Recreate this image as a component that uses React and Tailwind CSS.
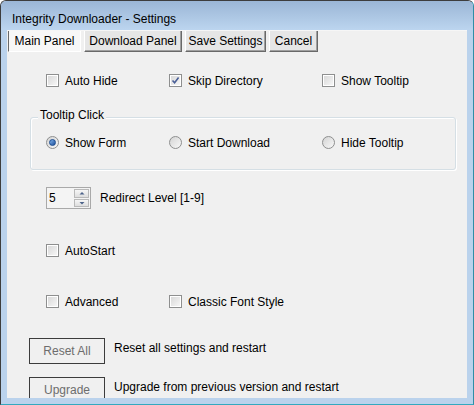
import React from 'react';

const font = { fontFamily: '"Liberation Sans", Arial, sans-serif' };

const Check = ({ checked }) => (
    <span className="w-[13px] h-[13px] shrink-0 border border-[#8e8f8f] bg-white p-px flex">
        <span className="flex-1 bg-gradient-to-br from-[#d9d9d9] to-[#f6f6f6] flex items-center justify-center">
            {checked && (
                <svg width="9" height="9" viewBox="0 0 9 9">
                    <path d="M1.5 4.5 L3.6 6.8 L7.6 1.6" fill="none" stroke="#4a5f97" strokeWidth="1.6" />
                </svg>
            )}
        </span>
    </span>
);

const Radio = ({ checked }) => (
    <span className="w-[13px] h-[13px] shrink-0 rounded-full border border-[#8e8f8f] bg-gradient-to-br from-[#d4d4d4] to-[#f8f8f8] flex items-center justify-center">
        {checked && <span className="w-[7px] h-[7px] rounded-full bg-gradient-to-br from-[#7fb2ec] to-[#1d4f9a] border border-[#194a8f]" />}
    </span>
);

const Option = ({ label, checked, radio }) => (
    <div className="flex items-center gap-[6px] h-[13px]">
        {radio ? <Radio checked={checked} /> : <Check checked={checked} />}
        <span className="text-[12px] leading-none text-black whitespace-nowrap">{label}</span>
    </div>
);

const TabButton = ({ label, active, w }) => (
    <div
        className={
            active
                ? 'h-[22px] flex items-center justify-center border border-t-[#696969] border-l-[#696969] border-r-white border-b-white bg-[#f7f7f7] text-[12px] text-black'
                : 'h-[22px] flex items-center justify-center border border-t-white border-l-white border-r-[#696969] border-b-[#696969] bg-[#e6e6e6] shadow-[inset_-1px_-1px_0_#a0a0a0] text-[12px] text-black'
        }
        style={{ width: w }}
    >
        {label}
    </div>
);

const Spinner = () => (
    <div className="w-[45px] h-[22px] border border-[#a9a9a9] bg-[#f4f4f4] flex items-center pl-[2px] pr-[1px]">
        <span className="flex-1 text-[12px] leading-none text-black">5</span>
        <div className="w-[15px] h-[18px] flex flex-col gap-[1px]">
            {['M1.5 4.5 L4 2 L6.5 4.5 Z', 'M1.5 2 L4 4.5 L6.5 2 Z'].map((d) => (
                <div key={d} className="flex-1 border border-[#b9b9b9] bg-gradient-to-b from-[#f6f6f6] to-[#dedede] flex items-center justify-center">
                    <svg width="8" height="6" viewBox="0 0 8 6">
                        <path d={d} fill="#4c6289" />
                    </svg>
                </div>
            ))}
        </div>
    </div>
);

const FlatButton = ({ label }) => (
    <div className="w-[76px] h-[26px] shrink-0 border border-[#3c3c3c] flex items-center justify-center text-[12px] text-[#6d6d6d]">
        {label}
    </div>
);

export default function App() {
    return (
        <div className="w-[474px] h-[405px] overflow-hidden bg-white" style={font}>
            <div className="w-[474px] h-[405px] flex flex-col bg-[#bad2ec] border border-t-[#3d3d3d] border-l-[#3d3d3d] border-r-[#2f8ea6] border-b-[#33a9bf] rounded-t-[6px] overflow-hidden">
                {/* title bar */}
                <div className="h-[29px] shrink-0 bg-gradient-to-b from-[#9bb6d6] to-[#bcd5ef] flex items-center pl-[11px] pt-[7px]">
                    <span className="text-[12px] text-black leading-none">Integrity Downloader - Settings</span>
                </div>

                <div className="flex-1 mx-[6px] mb-[6px] bg-[#f0f0f0] border-t border-[#f6f6f6] flex flex-col overflow-hidden">
                    {/* top buttons */}
                    <div className="flex gap-[3px] pl-[1px] mt-[-1px]">
                        <TabButton label="Main Panel" active w={73} />
                        <TabButton label="Download Panel" w={98} />
                        <TabButton label="Save Settings" w={81} />
                        <TabButton label="Cancel" w={49} />
                    </div>

                    {/* options row */}
                    <div className="grid grid-cols-[123px_153px_1fr] pl-[39px] mt-[22px]">
                        <Option label="Auto Hide" />
                        <Option label="Skip Directory" checked />
                        <Option label="Show Tooltip" />
                    </div>

                    {/* group box */}
                    <div className="relative ml-[23px] w-[426px] h-[53px] mt-[30px] shrink-0 border border-[#d5dfe5] rounded-[3px] shadow-[inset_1px_1px_0_#ffffff,1px_1px_0_#ffffff]">
                        <span className="absolute -top-[9px] left-[7px] px-[2px] bg-[#f0f0f0] text-[12px] leading-none text-black">Tooltip Click</span>
                        <div className="grid grid-cols-[123px_153px_1fr] pl-[15px] pt-[18px]">
                            <Option label="Show Form" radio checked />
                            <Option label="Start Download" radio />
                            <Option label="Hide Tooltip" radio />
                        </div>
                    </div>

                    {/* redirect level */}
                    <div className="flex items-center gap-[9px] pl-[39px] mt-[17px]">
                        <Spinner />
                        <span className="text-[12px] leading-none text-black">Redirect Level [1-9]</span>
                    </div>

                    <div className="pl-[39px] mt-[35px]">
                        <Option label="AutoStart" />
                    </div>

                    <div className="grid grid-cols-[123px_1fr] pl-[39px] mt-[38px]">
                        <Option label="Advanced" />
                        <Option label="Classic Font Style" />
                    </div>

                    <div className="flex items-start gap-[9px] pl-[22px] mt-[30px]">
                        <FlatButton label="Reset All" />
                        <span className="text-[12px] leading-none text-black pt-[4px]">Reset all settings and restart</span>
                    </div>

                    <div className="flex items-start gap-[9px] pl-[22px] mt-[13px]">
                        <FlatButton label="Upgrade" />
                        <span className="text-[12px] leading-none text-black pt-[4px]">Upgrade from previous version and restart</span>
                    </div>
                </div>
            </div>
        </div>
    );
}
